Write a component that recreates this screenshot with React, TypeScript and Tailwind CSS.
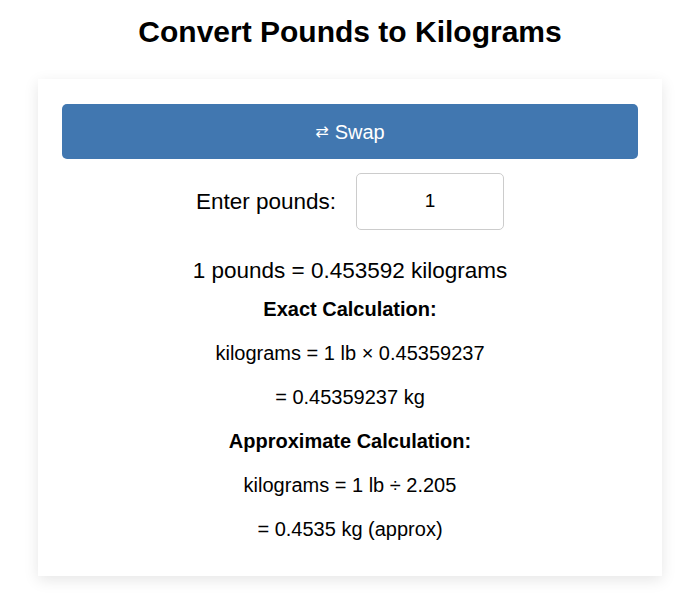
import React from "react";

export default function App() {
  return (
    <div className="min-h-[600px] w-[700px] bg-white text-black" style={{ fontFamily: '"Liberation Sans", Arial, sans-serif' }}>
      <h1 className="pt-[14px] text-center text-[30px] font-bold leading-[36px]">Convert Pounds to Kilograms</h1>
      <div className="mx-auto mt-[29px] w-[624px] bg-white px-[24px] pb-[34px] pt-[25px] shadow-[0_4px_14px_rgba(0,0,0,0.1)]">
        <button className="flex h-[55px] w-full items-center justify-center rounded-[5px] bg-[#4177b0] text-[20px] text-white">
          <span className="mr-[6px]" style={{ fontFamily: '"DejaVu Sans", sans-serif', fontSize: 16 }}>⇄</span>
          Swap
        </button>
        <div className="mt-[14px] flex items-center justify-center gap-[20px]">
          <span className="text-[22.5px]">Enter pounds:</span>
          <div className="flex h-[57px] w-[148px] items-center justify-center rounded-[5px] border border-[#cccccc] text-[19px]">1</div>
        </div>
        <div className="mt-[28px] text-center text-[22.5px] leading-[26px]">1 pounds = 0.453592 kilograms</div>
        <div className="mt-[12px] text-center text-[20px] font-bold leading-[26px]">Exact Calculation:</div>
        <div className="mt-[18px] text-center text-[20px] leading-[26px]">kilograms = 1 lb × 0.45359237</div>
        <div className="mt-[18px] text-center text-[20px] leading-[26px]">= 0.45359237 kg</div>
        <div className="mt-[18px] text-center text-[20px] font-bold leading-[26px]">Approximate Calculation:</div>
        <div className="mt-[18px] text-center text-[20px] leading-[26px]">kilograms = 1 lb ÷ 2.205</div>
        <div className="mt-[18px] text-center text-[20px] leading-[26px]">= 0.4535 kg (approx)</div>
      </div>
    </div>
  );
}
